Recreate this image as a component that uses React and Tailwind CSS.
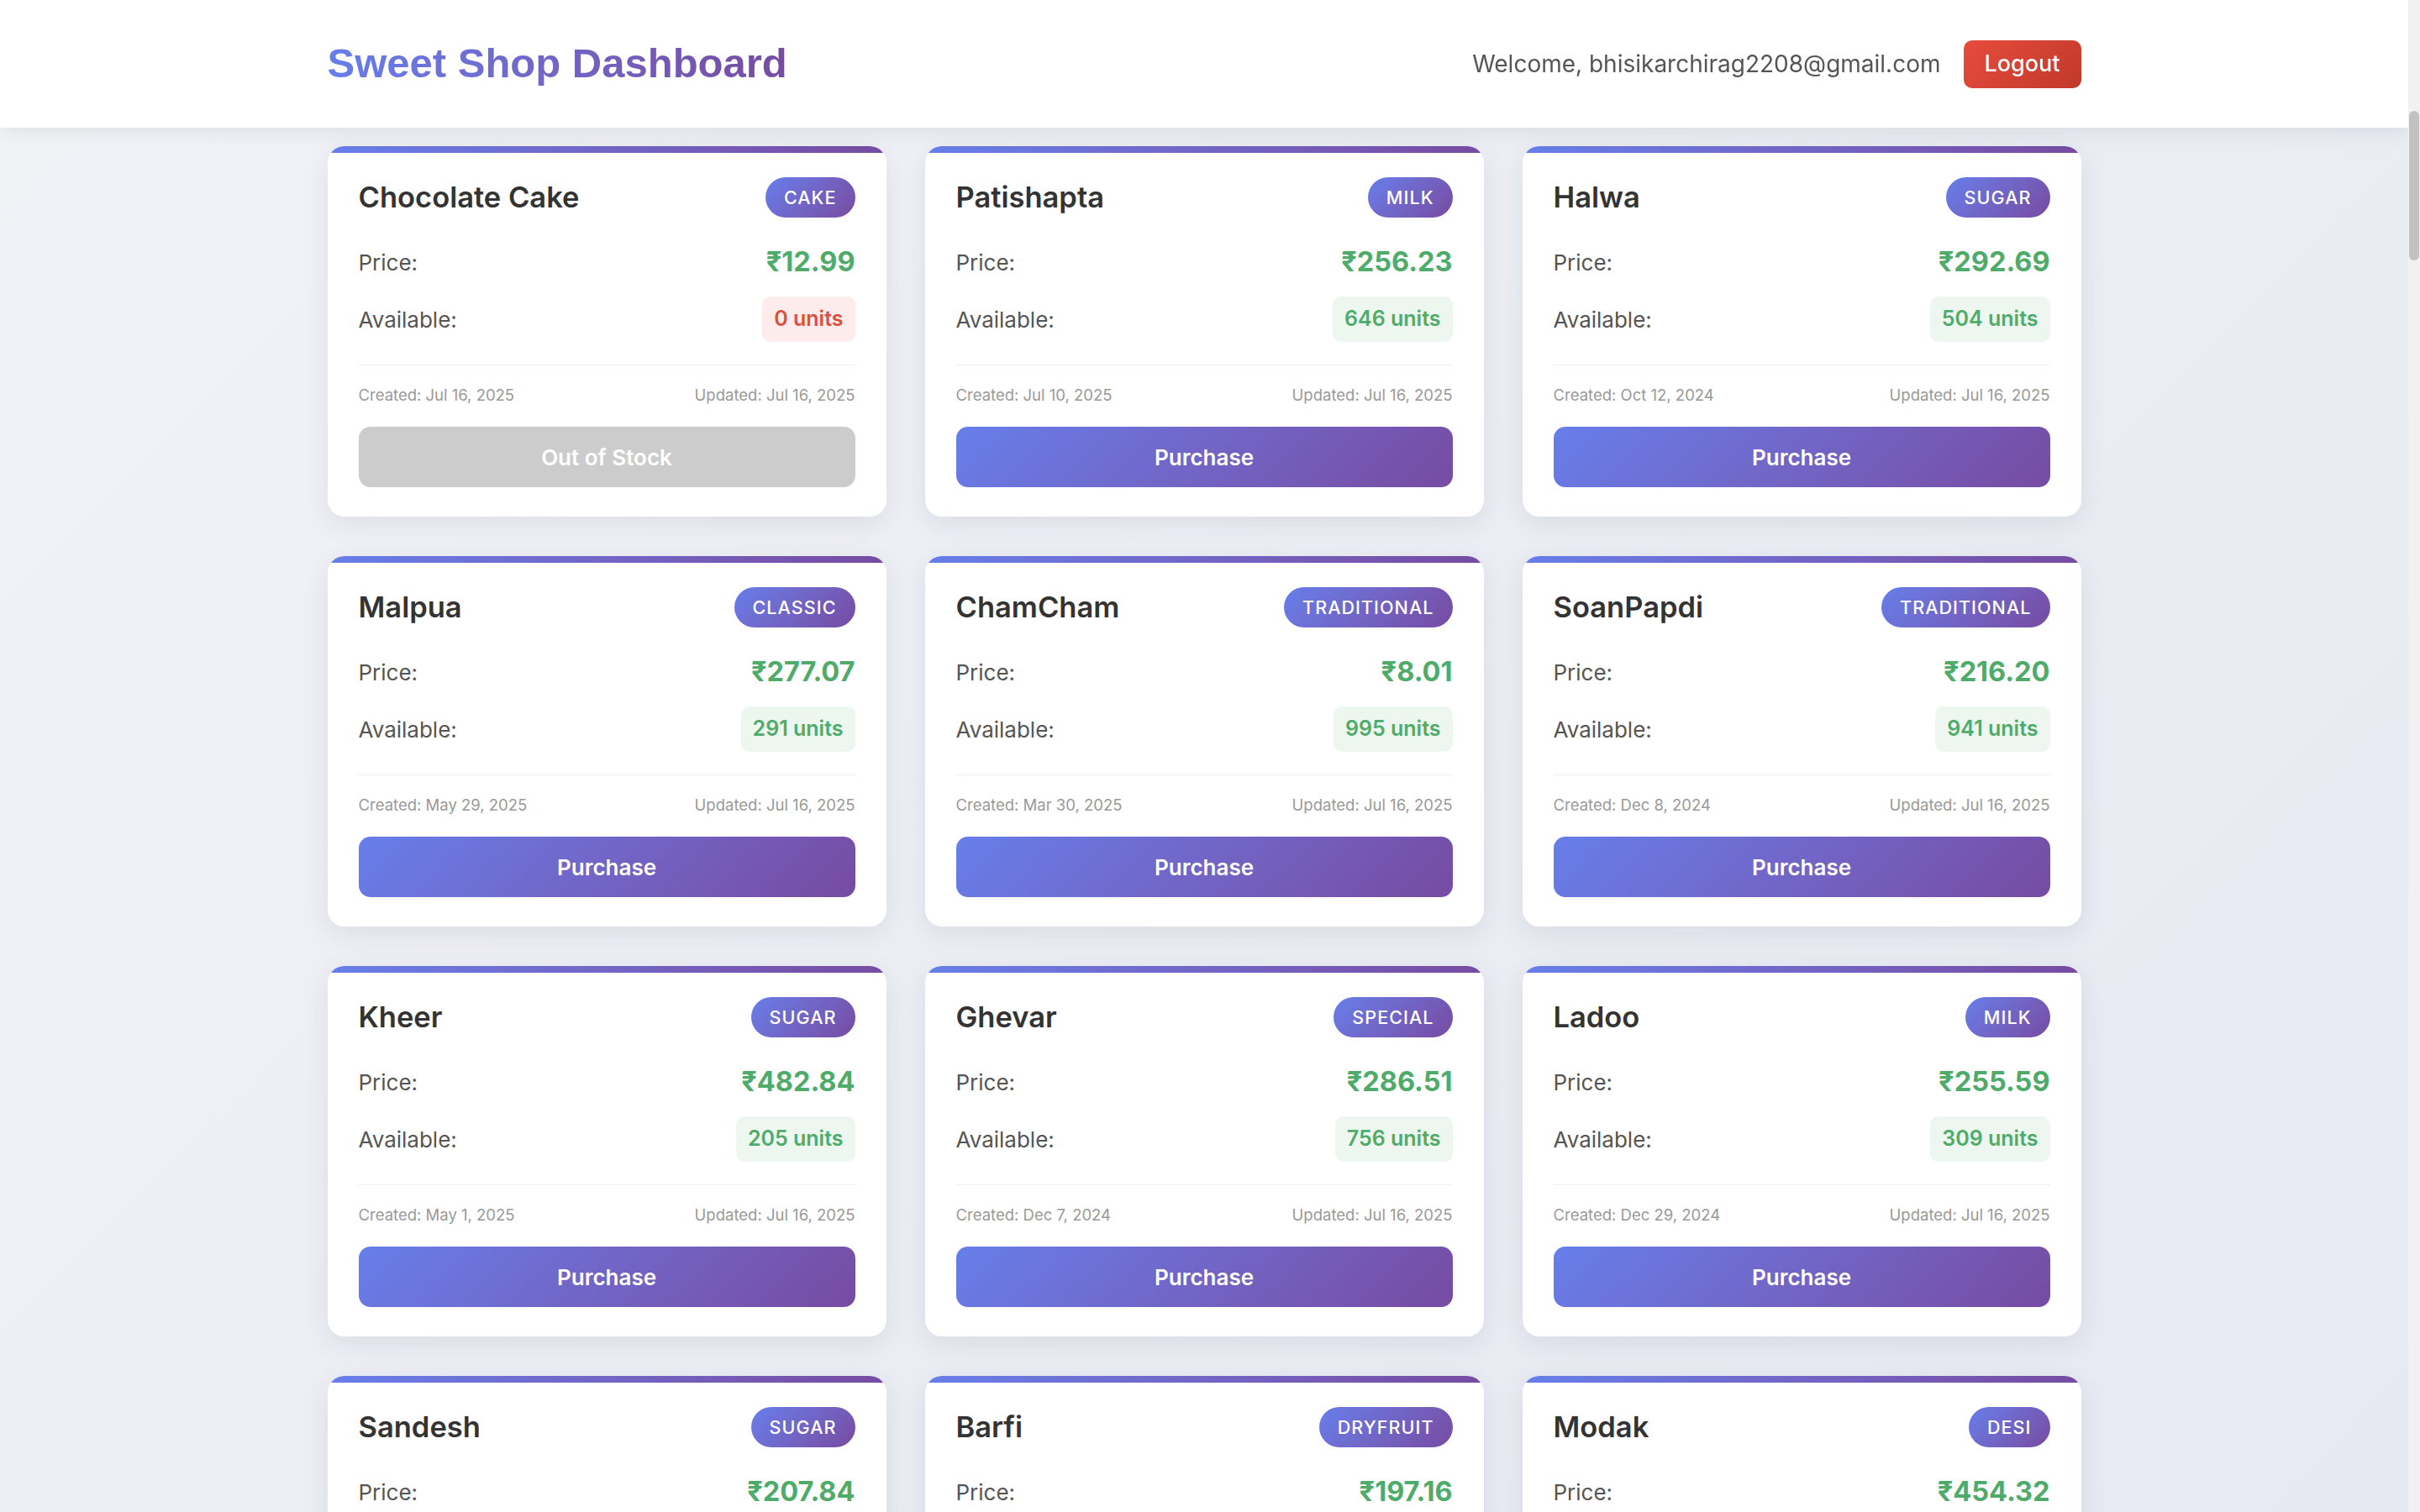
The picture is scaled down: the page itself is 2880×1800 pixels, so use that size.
const sweets = [
  { name: "Chocolate Cake", category: "cake", price: "12.99", qty: 0, created: "Jul 16, 2025" },
  { name: "Patishapta", category: "milk", price: "256.23", qty: 646, created: "Jul 10, 2025" },
  { name: "Halwa", category: "sugar", price: "292.69", qty: 504, created: "Oct 12, 2024" },
  { name: "Malpua", category: "classic", price: "277.07", qty: 291, created: "May 29, 2025" },
  { name: "ChamCham", category: "traditional", price: "8.01", qty: 995, created: "Mar 30, 2025" },
  { name: "SoanPapdi", category: "traditional", price: "216.20", qty: 941, created: "Dec 8, 2024" },
  { name: "Kheer", category: "sugar", price: "482.84", qty: 205, created: "May 1, 2025" },
  { name: "Ghevar", category: "special", price: "286.51", qty: 756, created: "Dec 7, 2024" },
  { name: "Ladoo", category: "milk", price: "255.59", qty: 309, created: "Dec 29, 2024" },
  { name: "Sandesh", category: "sugar", price: "207.84", qty: 412, created: "Jun 2, 2025" },
  { name: "Barfi", category: "dryfruit", price: "197.16", qty: 538, created: "Feb 14, 2025" },
  { name: "Modak", category: "desi", price: "454.32", qty: 187, created: "Nov 21, 2024" },
];

function SweetCard({ sweet }) {
  const inStock = sweet.qty > 0;
  return (
    <div className="bg-white rounded-[20px] overflow-hidden shadow-[0_8px_32px_rgba(30,40,70,0.09)] flex flex-col">
      <div className="h-[8px] bg-linear-to-r from-[#667eea] to-[#764ba2]" />
      <div className="px-[37px] pt-[29px] pb-[35px] flex flex-col">
        <div className="flex items-center justify-between h-[48px]">
          <h3 className="text-[34.5px] font-semibold text-[#333] leading-none">{sweet.name}</h3>
          <span className="h-[48px] px-[22px] rounded-full bg-linear-135 from-[#667eea] to-[#764ba2] text-white text-[21.5px] font-medium uppercase tracking-[0.05em] flex items-center">
            {sweet.category}
          </span>
        </div>

        <div className="mt-[33px] h-[40px] flex items-center justify-between">
          <span className="text-[26px] text-[#555]">Price:</span>
          <span className="text-[32.5px] font-bold text-[#4fab6a]">₹{sweet.price}</span>
        </div>

        <div className="mt-[21px] h-[54px] flex items-center justify-between">
          <span className="text-[26px] text-[#555]">Available:</span>
          <span
            className={
              inStock
                ? "h-[54px] px-[14px] rounded-[10px] flex items-center text-[25px] font-semibold bg-[#edf7ef] text-[#4fab6a]"
                : "h-[54px] px-[14px] rounded-[10px] flex items-center text-[25px] font-semibold bg-[#fdeceb] text-[#d9503f]"
            }
          >
            {sweet.qty} units
          </span>
        </div>

        <div className="mt-[27px] h-px bg-[#eeeeee]" />

        <div className="mt-[22px] h-[28px] flex items-center justify-between text-[18.5px] text-[#999]">
          <span>Created: {sweet.created}</span>
          <span>Updated: Jul 16, 2025</span>
        </div>

        {inStock ? (
          <button className="mt-[23px] h-[72px] w-full rounded-[14px] bg-linear-135 from-[#667eea] to-[#764ba2] text-white text-[26px] font-semibold">
            Purchase
          </button>
        ) : (
          <button disabled className="mt-[23px] h-[72px] w-full rounded-[14px] bg-[#cccccc] text-white text-[26px] font-semibold">
            Out of Stock
          </button>
        )}
      </div>
    </div>
  );
}

export default function App() {
  return (
    <div className="h-screen flex overflow-hidden font-['Inter',sans-serif]">
      <div className="flex-1 overflow-y-auto [scrollbar-width:none] bg-linear-135 from-[#f2f3f7] to-[#e6e9f2]">
        <header className="sticky top-0 z-10 h-[152px] bg-white shadow-[0_4px_24px_rgba(0,0,0,0.08)]">
          <div className="w-[2087px] h-full mx-auto flex items-center justify-between">
            <h1 className="font-['Liberation_Sans',Arial,sans-serif] text-[49px] font-bold bg-linear-to-r from-[#667eea] to-[#764ba2] bg-clip-text text-transparent">
              Sweet Shop Dashboard
            </h1>
            <div className="flex items-center gap-[27px]">
              <span className="text-[28px] text-[#555]">Welcome, bhisikarchirag2208@gmail.com</span>
              <button className="h-[57px] w-[140px] rounded-[10px] bg-linear-135 from-[#e74c3c] to-[#c0392b] text-white text-[27px] font-medium">
                Logout
              </button>
            </div>
          </div>
        </header>

        <main className="w-[2087px] mx-auto pt-[22px] pb-[60px]">
          <div className="grid grid-cols-3 gap-x-[46px] gap-y-[47px]">
            {sweets.map((s) => (
              <SweetCard key={s.name} sweet={s} />
            ))}
          </div>
        </main>
      </div>

      {/* scrollbar track */}
      <div className="w-[14px] shrink-0 bg-[#f1f1f1] pt-[132px]">
        <div className="mx-auto w-[12px] h-[178px] rounded-full bg-[#c1c1c1]" />
      </div>
    </div>
  );
}
